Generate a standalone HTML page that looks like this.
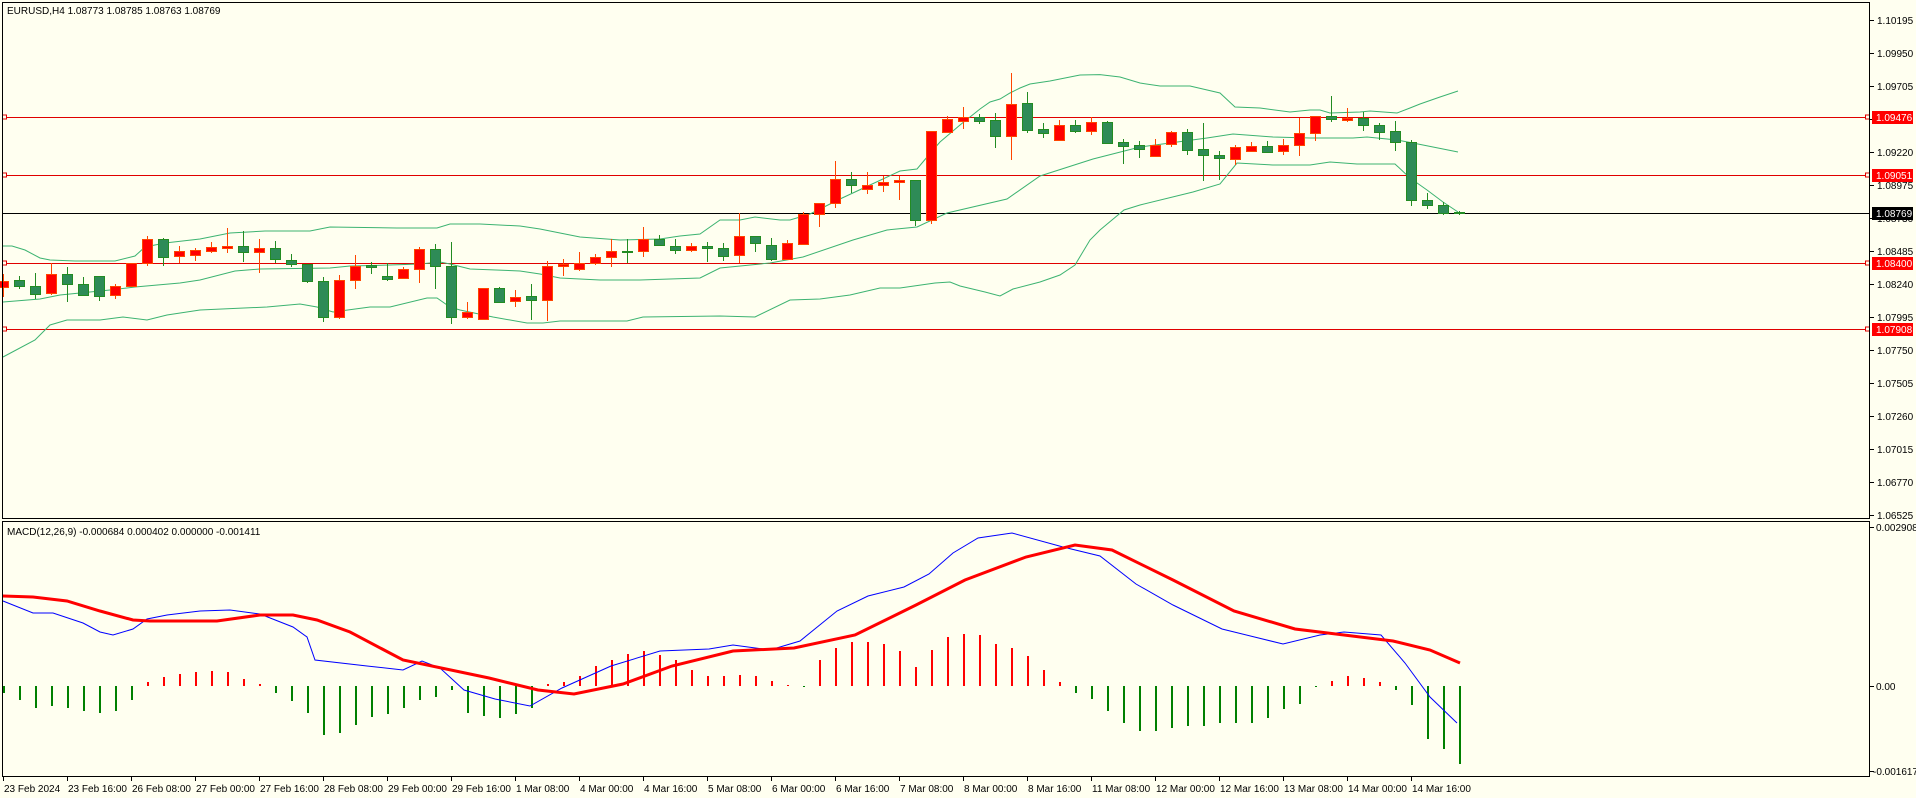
<!DOCTYPE html>
<html><head><meta charset="utf-8">
<style>
html,body{margin:0;padding:0;background:#FFFFF0;}
svg{display:block;}
text{font-family:"Liberation Sans",sans-serif;font-size:10px;fill:#000;}
</style></head>
<body>
<svg id="s" xmlns="http://www.w3.org/2000/svg" width="1916" height="798" viewBox="0 0 1916 798">
<rect width="1916" height="798" fill="#FFFFF0"/>
<g id="g"></g>
<rect x="2.5" y="2.5" width="1867" height="516" fill="none" stroke="#000" stroke-width="1"/>
<rect x="2.5" y="521.5" width="1867" height="255" fill="none" stroke="#000" stroke-width="1"/>
<text x="7" y="14">EURUSD,H4  1.08773 1.08785 1.08763 1.08769</text>
<text x="7" y="535">MACD(12,26,9) -0.000684 0.000402 0.000000 -0.001411</text>
</svg>
<script>
var NS="http://www.w3.org/2000/svg",g=document.getElementById('g');
function el(t,a,txt){var e=document.createElementNS(NS,t);for(var k in a)e.setAttribute(k,a[k]);if(txt!=null)e.textContent=txt;g.appendChild(e);return e;}
var ticks=[["1.10195",20],["1.09950",53],["1.09705",86],["1.09460",119],["1.09220",152],["1.08975",185],["1.08730",218],["1.08485",251],["1.08240",284],["1.07995",317],["1.07750",350],["1.07505",383],["1.07260",416],["1.07015",449],["1.06770",482],["1.06525",515]];
ticks.forEach(function(t){el('line',{x1:1870,x2:1874,y1:t[1]+.5,y2:t[1]+.5,stroke:'#000'});el('text',{x:1877,y:t[1]+4},t[0]);});
[["0.002908",527],["0.00",686],["-0.001617",771]].forEach(function(t){el('line',{x1:1870,x2:1874,y1:t[1]+.5,y2:t[1]+.5,stroke:'#000'});el('text',{x:t[0][0]=='-'?1873:1876,y:t[1]+4},t[0]);});
var tl=["23 Feb 2024","23 Feb 16:00","26 Feb 08:00","27 Feb 00:00","27 Feb 16:00","28 Feb 08:00","29 Feb 00:00","29 Feb 16:00","1 Mar 08:00","4 Mar 00:00","4 Mar 16:00","5 Mar 08:00","6 Mar 00:00","6 Mar 16:00","7 Mar 08:00","8 Mar 00:00","8 Mar 16:00","11 Mar 08:00","12 Mar 00:00","12 Mar 16:00","13 Mar 08:00","14 Mar 00:00","14 Mar 16:00"];
tl.forEach(function(t,k){var x=3+64*k;el('line',{x1:x+.5,x2:x+.5,y1:777,y2:781,stroke:'#000'});el('text',{x:x+1,y:792},t);});
[117,175,263,329].forEach(function(y){el('line',{x1:2,x2:1870,y1:y+.5,y2:y+.5,stroke:'#E00000'});el('rect',{x:2.5,y:y-2,width:4,height:4,fill:'#FFFFF0',stroke:'#E00000'});el('rect',{x:1865.5,y:y-2,width:4,height:4,fill:'#FFFFF0',stroke:'#E00000'});});
el('line',{x1:2,x2:1870,y1:213.5,y2:213.5,stroke:'#000'});
function pl(s,c,w){el('polyline',{points:s,fill:'none',stroke:c,'stroke-width':w||1});}
pl("3,246 12,246 25,250 40,258 50,260 75,261 115,261 135,256 145,247 165,243 200,239 230,233 265,231 310,231 330,227 397,228 437,228 450,224 480,224 520,226 540,229 560,233 580,237 620,240 660,239 680,236 700,234 720,220 740,220 755,217 780,220 790,220 810,214 840,199 870,185 900,171 917,169 933,150 940,142 960,125 980,109 990,102 1000,99 1010,93 1020,88 1030,84 1050,81 1070,77 1080,75 1100,74.6 1120,77 1140,83 1160,86 1190,86 1220,93 1235,107 1260,108 1290,112 1310,110 1320,110 1330,113 1360,112 1370,111 1397,113 1410,108 1420,104 1440,97 1458,91","#3CB371");
pl("3,302 40,299 60,295 80,293 110,290 135,287 180,283 200,280 235,271 260,269 330,268 350,266 390,265 420,264 440,262 450,264 470,269 520,271 540,274 560,278 600,280 640,280 700,278 720,268 770,263 803,257 853,240 887,230 917,227 947,213 1007,199 1040,176 1093,159 1140,147 1207,138 1233,134 1273,137 1310,138 1353,138 1367,137 1397,140 1413,143 1433,147 1458,152","#3CB371");
pl("3,357 35,340 50,325 67,320 100,320 123,317 147,320 167,315 200,310 267,307 300,304 317,307 333,312 370,307 390,307 427,298 437,298 450,307 460,310 493,317 527,323 543,323 560,321 627,321 643,317 720,316 755,317 790,300 820,299 850,295 880,288 900,288 935,283 950,282 960,286 985,292 1000,296 1013,289 1040,282 1060,275 1075,265 1090,240 1100,230 1124,210 1140,205 1193,192 1220,184 1237,163 1273,165 1310,165 1330,162 1357,164 1395,164 1410,178 1427,190 1443,202 1458,212","#3CB371");
var C=[[281,287,274,297,'r'],[280,286,276,289,'g'],[286,294,273,299,'g'],[274,293,263,295,'r'],[274,284,267,302,'g'],[284,295,277,295,'g'],[276,296,276,301,'g'],[286,295,284,299,'r'],[263,286,263,286,'r'],[239,263,236,266,'r'],
[239,257,238,266,'g'],[251,256,246,263,'r'],[250,255,248,261,'r'],[247,251,242,253,'r'],[246,248,228,253,'r'],[246,252,231,262,'g'],[248,252,239,273,'r'],[248,259,241,263,'g'],[260,264,254,267,'g'],[264,281,264,283,'g'],
[281,317,277,322,'g'],[280,317,275,319,'r'],[266,280,255,289,'r'],[265,267,262,274,'g'],[276,279,263,281,'g'],[269,278,267,278,'r'],[249,269,247,283,'r'],[249,266,244,289,'g'],[266,317,242,324,'g'],[312,317,302,319,'r'],
[288,319,288,319,'r'],[288,302,287,303,'g'],[297,301,290,307,'r'],[296,300,284,320,'g'],[266,300,261,321,'r'],[264,266,259,276,'r'],[263,269,252,271,'r'],[257,263,254,265,'r'],[251,257,239,267,'r'],[251,251,239,263,'g'],
[239,251,227,257,'r'],[239,245,235,245,'g'],[246,250,239,254,'g'],[246,250,243,252,'r'],[246,248,242,262,'g'],[248,256,243,261,'g'],[236,255,213,263,'r'],[236,243,236,252,'g'],[245,259,238,261,'g'],[243,259,240,259,'r'],
[214,244,212,244,'r'],[203,214,203,227,'r'],[179,203,161,208,'r'],[179,185,172,193,'g'],[185,189,172,194,'r'],[182,185,176,192,'r'],[180,182,176,200,'r'],[180,220,180,226,'g'],[131,220,131,224,'r'],[119,132,116,132,'r'],
[117,121,107,129,'r'],[117,121,114,124,'g'],[120,136,113,148,'g'],[104,136,73,160,'r'],[103,130,92,133,'g'],[129,133,123,138,'g'],[125,140,120,140,'r'],[125,131,120,133,'g'],[122,131,117,135,'r'],[122,143,121,144,'g'],
[142,146,139,164,'g'],[145,149,141,158,'g'],[145,156,139,156,'r'],[132,144,131,147,'r'],[132,150,129,155,'g'],[149,155,123,181,'g'],[155,158,151,180,'g'],[147,159,145,165,'r'],[146,151,142,151,'r'],[146,152,141,153,'g'],
[145,151,139,155,'r'],[133,145,118,156,'r'],[116,133,116,141,'r'],[116,119,96,122,'g'],[118,120,108,122,'r'],[118,125,112,131,'g'],[125,132,123,140,'g'],[131,142,121,151,'g'],[142,200,140,206,'g'],[200,205,193,209,'g'],
[205,213,202,215,'g'],[212,213,211,215,'g']];
C.forEach(function(c,n){var x=3.5+16*n;var red=c[4]=='r';var wc=red?'#FF4500':'#228B22';
el('line',{x1:x,x2:x,y1:c[2],y2:c[3],stroke:wc,'stroke-width':1});
var h=Math.max(c[1]-c[0],1);
el('rect',{x:x-5,y:c[0]+.5,width:10,height:h,fill:red?'#FF0000':'#2E8B57',stroke:wc,'stroke-width':1});});
var H=[693,700,708,706,708,711,713,711,700,682,677,674,672,671,672,679,684,693,701,713,735,733,725,717,714,708,700,697,690,713,716,718,714,708,684,682,676,666,660,654,651,655,660,670,676,676,675,676,681,685,687,660,648,642,642,644,651,667,650,637,634,635,644,648,656,670,682,693,699,711,723,731,731,728,726,726,723,723,723,718,709,704,687,681,676,678,682,690,705,739,749,764];
H.forEach(function(v,n){var x=3+16*n;var red=v<686;el('rect',{x:x,y:Math.min(v,686),width:2,height:Math.max(Math.abs(v-686),1),fill:red?'#FF0000':'#008000'});});
pl("3,601 33,613 53,613 83,623 100,632 113,635 133,629 147,619 167,615 200,611 230,610 260,614 293,627 307,637 315,660 367,666 403,670 422,661 440,668 464,690 495,699 530,706 562,688 611,666 660,651 709,649 733,645 770,650 800,641 837,611 868,596 904,587 929,574 953,553 978,538 1012,533 1063,547 1100,556 1136,584 1173,605 1222,629 1283,644 1320,635 1344,632 1381,635 1405,663 1430,697 1457,723","#0000FF",1);
pl("3,596 33,597 67,601 100,611 133,620 150,621 217,621 260,615 293,615 317,620 350,632 403,660 489,678 538,690 574,694 623,684 672,666 733,651 794,648 855,635 916,605 965,580 1026,557 1075,545 1112,550 1173,580 1234,611 1295,629 1344,635 1393,641 1430,650 1460,663","#FF0000",3);
[["1.09476",117,'#FF0000','#fff'],["1.09051",175,'#FF0000','#fff'],["1.08769",213,'#000','#fff'],["1.08400",263,'#FF0000','#fff'],["1.07908",329,'#FF0000','#fff']].forEach(function(l){el('rect',{x:1872,y:l[1]-6,width:41,height:13,fill:l[2]});el('text',{x:1876,y:l[1]+4,style:'fill:'+l[3]},l[0]);});
</script>
</body></html>
